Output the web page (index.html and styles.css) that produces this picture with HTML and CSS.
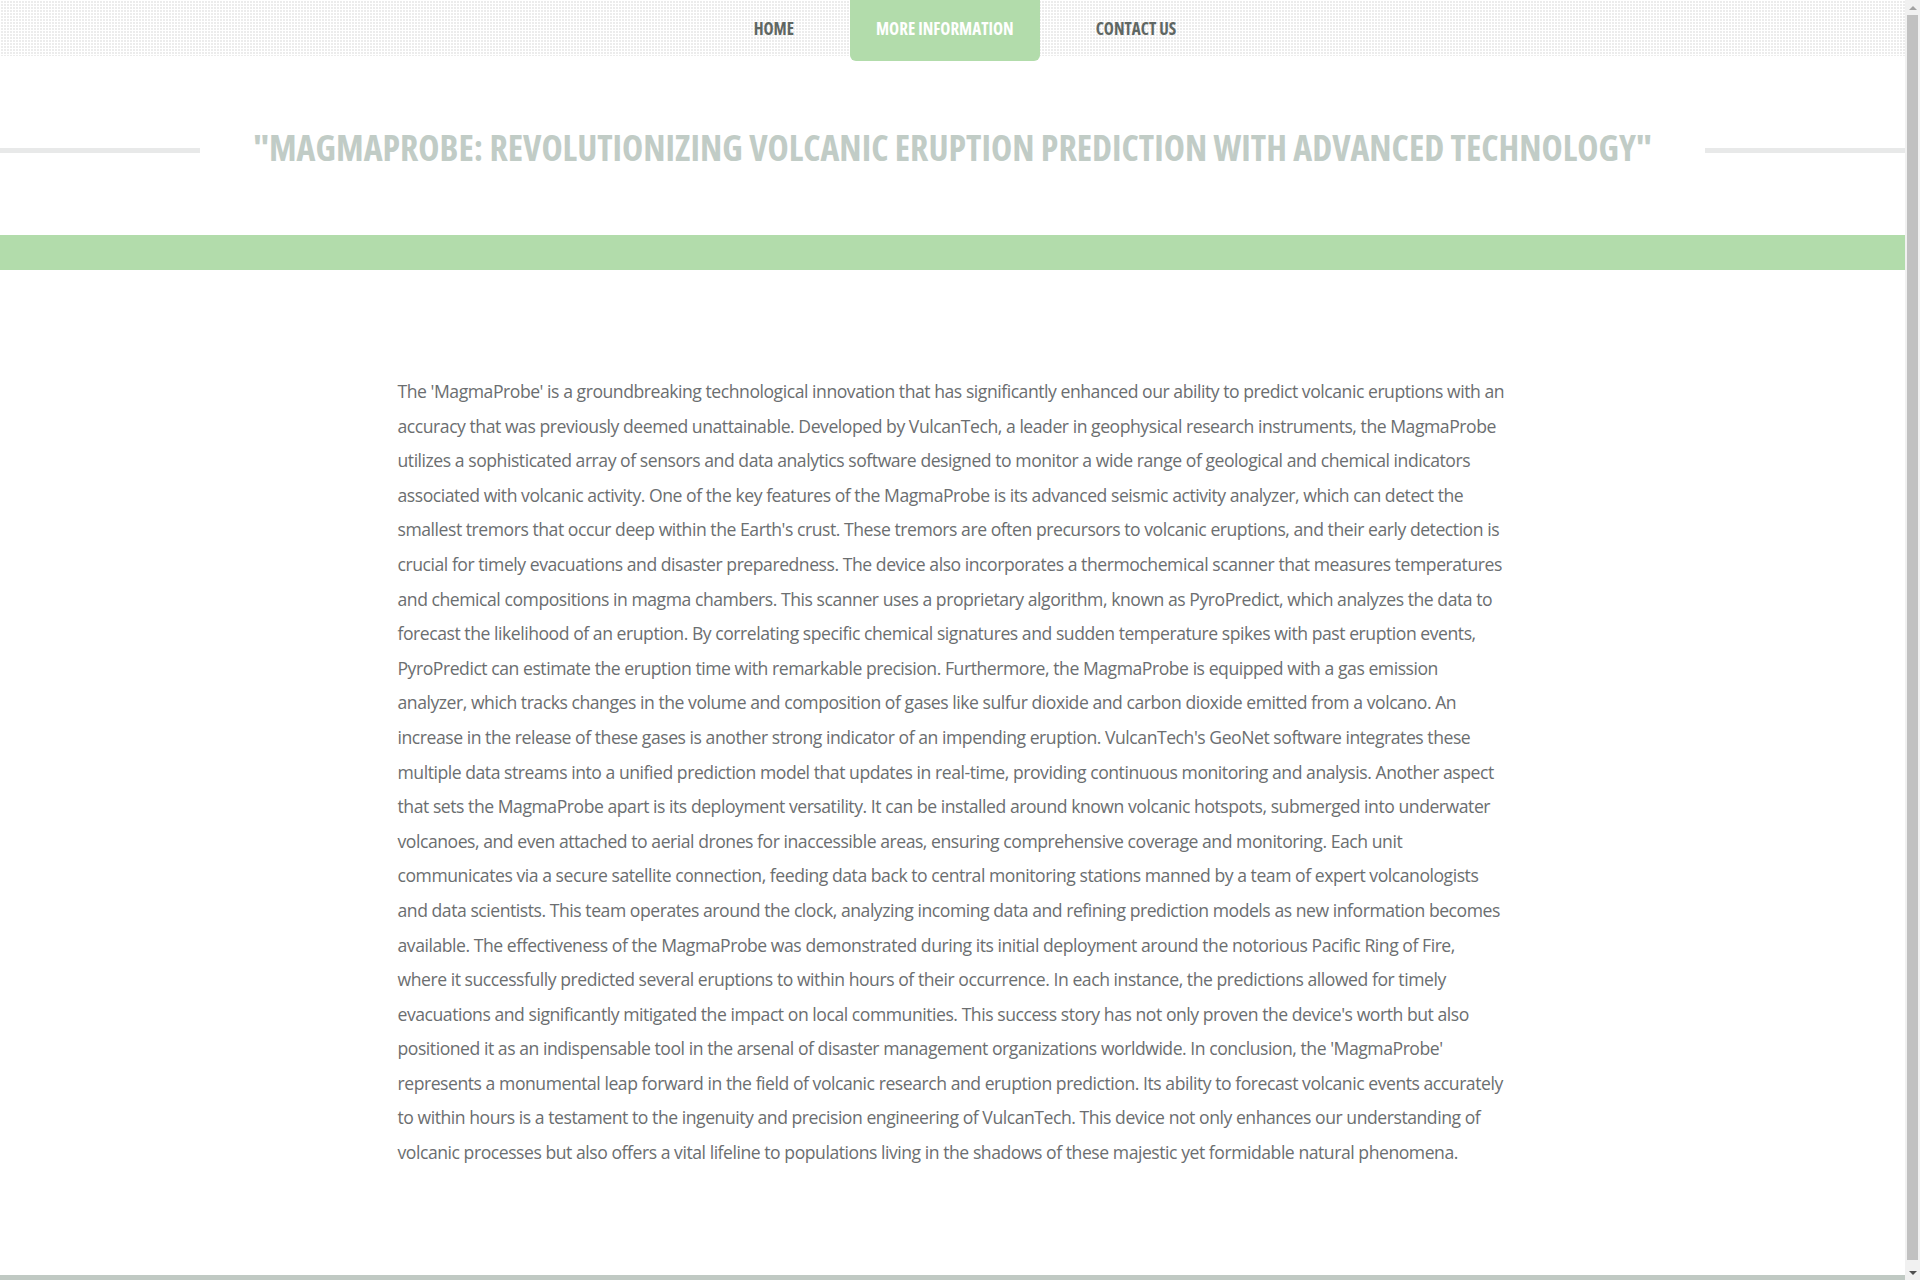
FILE: index.html
```html
<!DOCTYPE html>
<html lang="en">
<head>
<meta charset="utf-8">
<title>MagmaProbe</title>
<link rel="stylesheet" href="styles.css">
</head>
<body>
<nav class="topnav">
  <ul class="menu">
    <li><a href="#" class="menu-link">Home</a></li>
    <li><a href="#" class="menu-link active">More Information</a></li>
    <li><a href="#" class="menu-link">Contact Us</a></li>
  </ul>
</nav>
<header class="title-section">
  <span class="rule"></span>
  <h1 class="title">"MagmaProbe: Revolutionizing Volcanic Eruption Prediction with Advanced Technology"</h1>
  <span class="rule"></span>
</header>
<div class="band"></div>
<main class="content">
  <p class="article">The 'MagmaProbe' is a groundbreaking technological innovation that has significantly enhanced our ability to predict volcanic eruptions with an accuracy that was previously deemed unattainable. Developed by VulcanTech, a leader in geophysical research instruments, the MagmaProbe utilizes a sophisticated array of sensors and data analytics software designed to monitor a wide range of geological and chemical indicators associated with volcanic activity. One of the key features of the MagmaProbe is its advanced seismic activity analyzer, which can detect the smallest tremors that occur deep within the Earth's crust. These tremors are often precursors to volcanic eruptions, and their early detection is crucial for timely evacuations and disaster preparedness. The device also incorporates a thermochemical scanner that measures temperatures and chemical compositions in magma chambers. This scanner uses a proprietary algorithm, known as PyroPredict, which analyzes the data to forecast the likelihood of an eruption. By correlating specific chemical signatures and sudden temperature spikes with past eruption events, PyroPredict can estimate the eruption time with remarkable precision. Furthermore, the MagmaProbe is equipped with a gas emission analyzer, which tracks changes in the volume and composition of gases like sulfur dioxide and carbon dioxide emitted from a volcano. An increase in the release of these gases is another strong indicator of an impending eruption. VulcanTech's GeoNet software integrates these multiple data streams into a unified prediction model that updates in real-time, providing continuous monitoring and analysis. Another aspect that sets the MagmaProbe apart is its deployment versatility. It can be installed around known volcanic hotspots, submerged into underwater volcanoes, and even attached to aerial drones for inaccessible areas, ensuring comprehensive coverage and monitoring. Each unit communicates via a secure satellite connection, feeding data back to central monitoring stations manned by a team of expert volcanologists and data scientists. This team operates around the clock, analyzing incoming data and refining prediction models as new information becomes available. The effectiveness of the MagmaProbe was demonstrated during its initial deployment around the notorious Pacific Ring of Fire, where it successfully predicted several eruptions to within hours of their occurrence. In each instance, the predictions allowed for timely evacuations and significantly mitigated the impact on local communities. This success story has not only proven the device's worth but also positioned it as an indispensable tool in the arsenal of disaster management organizations worldwide. In conclusion, the 'MagmaProbe' represents a monumental leap forward in the field of volcanic research and eruption prediction. Its ability to forecast volcanic events accurately to within hours is a testament to the ingenuity and precision engineering of VulcanTech. This device not only enhances our understanding of volcanic processes but also offers a vital lifeline to populations living in the shadows of these majestic yet formidable natural phenomena.</p>
</main>
<footer class="footer"></footer>
<div class="scrollbar" aria-hidden="true">
  <span class="sb-arrow sb-up"></span>
  <span class="sb-thumb"></span>
  <span class="sb-arrow sb-down"></span>
</div>
</body>
</html>
```
FILE: styles.css
```css
html, body {
  padding: 0;
  background: #fff;
}
html {
  margin: 0;
}
body {
  margin: 0 15px 0 0;
  font-family: "Open Sans", "Liberation Sans", sans-serif;
  color: #6b6e70;
}
.topnav {
  height: 56px;
  background-color: #ececec;
  background-image:
    linear-gradient(90deg, #fff 1px, transparent 1px),
    linear-gradient(#fff 1px, transparent 1px);
  background-size: 3px 3px;
}
.menu {
  list-style: none;
  margin: 0;
  padding: 0 0 0 25px;
  display: flex;
  justify-content: center;
  gap: 30px;
}
.menu-link {
  display: block;
  padding: 0 26px 4px;
  line-height: 57px;
  font-family: "Open Sans", "Liberation Sans Narrow", sans-serif;
  font-stretch: 75%;
  font-weight: 700;
  font-size: 17px;
  text-transform: uppercase;
  text-decoration: none;
  color: #5f6763;
  border-radius: 0 0 6px 6px;
}
.menu-link.active {
  background: #b2dcab;
  color: #fff;
}
.title-section {
  display: flex;
  align-items: center;
  padding: 70px 0 66px;
}
.rule {
  flex: 1;
  height: 5px;
  margin-top: 5px;
  background: #e8e9e9;
}
.title {
  margin: 0 53px;
  font-family: "Open Sans", "Liberation Sans Narrow", sans-serif;
  font-stretch: 75%;
  font-weight: 700;
  font-size: 35.8px;
  line-height: 43px;
  text-transform: uppercase;
  color: #c1ccc6;
  white-space: nowrap;
}
.band {
  height: 35px;
  background: #b2dcab;
}
.content {
  max-width: 1110px;
  margin: 0 auto;
  padding: 104px 15px 105px;
}
.article {
  margin: 0;
  font-size: 17.6px;
  letter-spacing: -0.46px;
  line-height: 34.6px;
}
.footer {
  height: 10px;
  background: #c0c9c3;
}
.scrollbar {
  position: fixed;
  top: 0;
  right: 0;
  width: 15px;
  height: 100vh;
  background: #f1f1f1;
  display: flex;
  flex-direction: column;
  align-items: center;
}
.sb-arrow {
  flex: 0 0 15px;
  width: 15px;
  display: flex;
  align-items: center;
  justify-content: center;
}
.sb-arrow::before {
  content: "";
  width: 0;
  height: 0;
  border-left: 4px solid transparent;
  border-right: 4px solid transparent;
}
.sb-up::before {
  border-bottom: 4px solid #a3a3a3;
}
.sb-down::before {
  border-top: 4px solid #505050;
}
.sb-thumb {
  flex: 1;
  align-self: stretch;
  margin: 0 2px 5px;
  background: #c1c1c1;
}
```
